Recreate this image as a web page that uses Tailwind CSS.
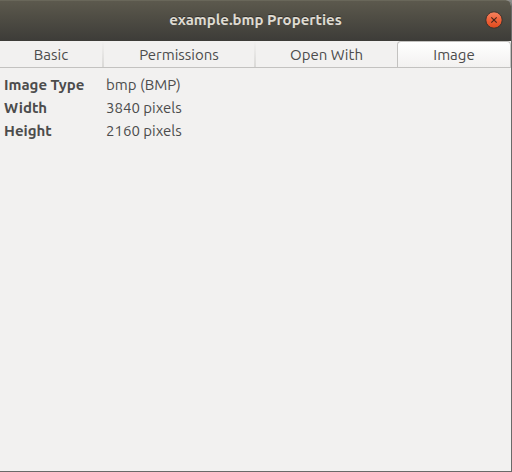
<!DOCTYPE html>
<html lang="en">
<head>
<meta charset="utf-8">
<meta name="viewport" content="width=device-width, initial-scale=1">
<title>example.bmp Properties</title>
<script src="https://cdn.jsdelivr.net/npm/@tailwindcss/browser@4"></script>
</head>
<body class="min-h-screen bg-[#8f8f8d] font-['Ubuntu','Noto_Sans',sans-serif] text-[15px] text-[#4c4c4c]">
<main class="flex min-h-screen flex-col overflow-hidden rounded-tr-md border-r border-b border-[#6a6a69] bg-[#f2f1f0]">
  <header class="grid h-[41px] grid-cols-[1fr_auto_1fr] items-center border-t border-[#69675a] bg-linear-to-b from-[#5c594d] to-[#3d3c38] px-2 pb-[2px]">
    <h1 class="col-start-2 font-bold leading-5 text-[#dfdbd2] text-shadow-[0_-1px_0_#33322e]">example.bmp Properties</h1>
    <button type="button" aria-label="Close" class="justify-self-end">
      <svg class="block size-[18px]" viewBox="0 0 18 18" aria-hidden="true">
        <defs><linearGradient id="close-fill" x1="0" y1="0" x2="0" y2="1"><stop offset="0" stop-color="#f58460"/><stop offset=".5" stop-color="#f0623a"/><stop offset="1" stop-color="#df4a1b"/></linearGradient></defs>
        <circle cx="9" cy="9" r="8.2" fill="url(#close-fill)" stroke="#3a332d" stroke-width="1"/>
        <path d="M6.3 6.3l5.4 5.4M11.7 6.3l-5.4 5.4" stroke="#49271a" stroke-width="1.2"/>
      </svg>
    </button>
  </header>
  <nav role="tablist" aria-label="Properties" class="grid h-[27px] grid-cols-[102fr_2px_150fr_2px_141fr_114fr] border-b border-[#c3c2c0] leading-5">
    <button type="button" role="tab" aria-selected="false" class="border-t border-transparent">Basic</button>
    <span class="bg-linear-to-b from-[#f2f1f0] to-[#dad9d7]"></span>
    <button type="button" role="tab" aria-selected="false" class="border-t border-transparent">Permissions</button>
    <span class="bg-linear-to-b from-[#f2f1f0] to-[#dad9d7]"></span>
    <button type="button" role="tab" aria-selected="false" class="border-t border-transparent">Open With</button>
    <button type="button" role="tab" aria-selected="true" aria-controls="image-panel" id="image-tab" class="rounded-t border border-b-0 border-[#c3c2c0] bg-linear-to-b from-white to-[#f2f1f0]">Image</button>
  </nav>
  <section role="tabpanel" id="image-panel" aria-labelledby="image-tab" class="flex-1 px-1 py-[5px]">
    <table class="text-left leading-[23px]">
      <tbody>
        <tr><th scope="row" class="w-[102px] p-0 font-bold">Image Type</th><td class="p-0">bmp (BMP)</td></tr>
        <tr><th scope="row" class="p-0 font-bold">Width</th><td class="p-0">3840 pixels</td></tr>
        <tr><th scope="row" class="p-0 font-bold">Height</th><td class="p-0">2160 pixels</td></tr>
      </tbody>
    </table>
  </section>
</main>
</body>
</html>
